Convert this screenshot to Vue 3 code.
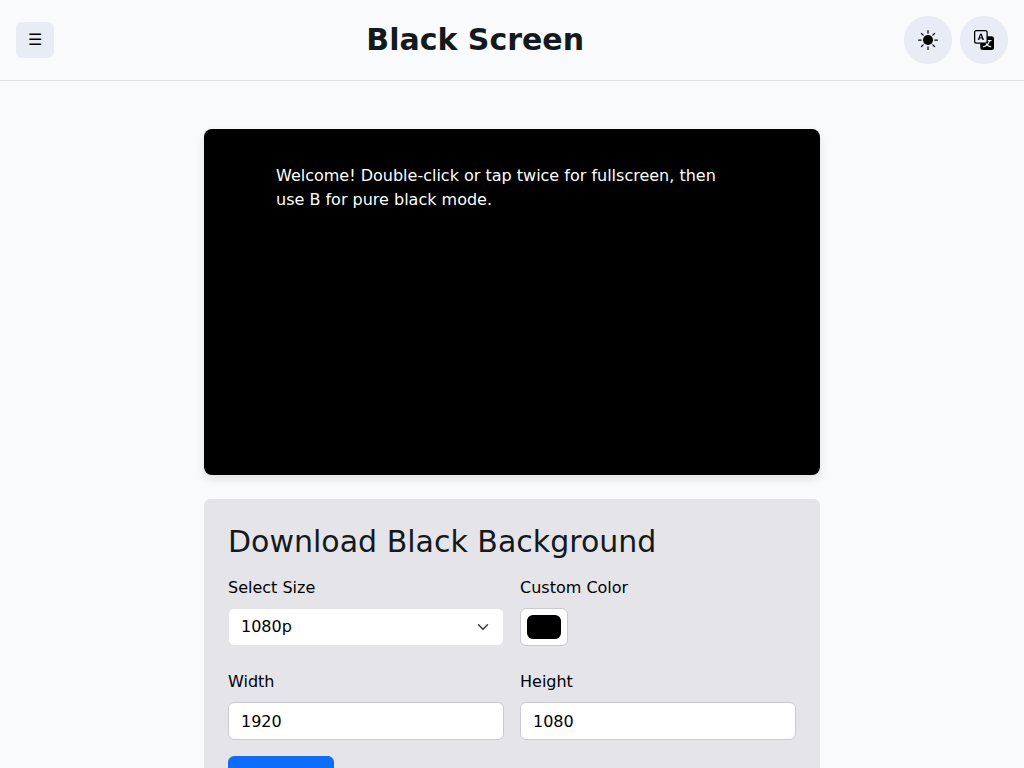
<script setup>
import { ref } from 'vue'

const sizes = {
  '720p': [1280, 720],
  '1080p': [1920, 1080],
  '4K': [3840, 2160],
}

const size = ref('1080p')
const color = ref('#000000')
const width = ref(1920)
const height = ref(1080)

function applySize() {
  ;[width.value, height.value] = sizes[size.value]
}
</script>

<template>
  <header class="topbar">
    <button class="menu" type="button" aria-label="Menu">☰</button>
    <h1 class="title">Black Screen</h1>
    <div class="actions">
      <button class="round" type="button" aria-label="Theme">
        <svg class="icon" viewBox="0 0 16 16" aria-hidden="true">
          <circle cx="8" cy="8" r="4" fill="currentColor" />
          <path
            d="M8 .5v2M8 13.5v2M.5 8h2M13.5 8h2M2.7 2.7l1.41 1.41M11.89 11.89l1.41 1.41M2.7 13.3l1.41-1.41M11.89 4.11l1.41-1.41"
            fill="none"
            stroke="currentColor"
            stroke-linecap="round"
          />
        </svg>
      </button>
      <button class="round" type="button" aria-label="Language">
        <svg class="icon" viewBox="0 0 16 16" fill="currentColor" aria-hidden="true">
          <path d="M4.545 6.714 4.11 8H3l1.862-5h1.284L8 8H6.833l-.435-1.286zm1.634-.736L5.5 3.956h-.049l-.679 2.022z" />
          <path d="M0 2a2 2 0 0 1 2-2h7a2 2 0 0 1 2 2v3h3a2 2 0 0 1 2 2v7a2 2 0 0 1-2 2H7a2 2 0 0 1-2-2v-3H2a2 2 0 0 1-2-2zm2-1a1 1 0 0 0-1 1v7a1 1 0 0 0 1 1h7a1 1 0 0 0 1-1V2a1 1 0 0 0-1-1zm7.138 9.995q.289.451.63.846c-.748.575-1.673 1.001-2.768 1.292.178.217.451.635.555.867 1.125-.359 2.08-.844 2.886-1.494.777.665 1.739 1.165 2.93 1.472.133-.254.414-.673.629-.89-1.125-.253-2.057-.694-2.82-1.284.681-.747 1.222-1.651 1.621-2.757H14V8h-3v1.047h.765c-.318.844-.74 1.546-1.272 2.13a6 6 0 0 1-.415-.492 2 2 0 0 1-.94.31" />
        </svg>
      </button>
    </div>
  </header>

  <main class="content">
    <section class="screen">
      <p class="hint">Welcome! Double-click or tap twice for fullscreen, then use B for pure black mode.</p>
    </section>

    <form class="panel" @submit.prevent>
      <h2 class="heading">Download Black Background</h2>
      <div class="fields">
        <div class="field">
          <label for="size">Select Size</label>
          <select id="size" v-model="size" class="control select" @change="applySize">
            <option v-for="(_, name) in sizes" :key="name">{{ name }}</option>
          </select>
        </div>
        <div class="field">
          <label for="color">Custom Color</label>
          <input id="color" v-model="color" class="swatch" type="color" />
        </div>
        <div class="field">
          <label for="width">Width</label>
          <input id="width" v-model="width" class="control" type="number" />
        </div>
        <div class="field">
          <label for="height">Height</label>
          <input id="height" v-model="height" class="control" type="number" />
        </div>
      </div>
      <button class="download" type="submit">Download</button>
    </form>
  </main>
</template>

<style>
body {
  background: #f8fafc;
  color: #000;
  font-family: "DejaVu Sans", sans-serif;
  font-size: 16px;
  line-height: 24px;
}
</style>

<style scoped>
* {
  box-sizing: border-box;
}

button,
input,
select {
  font: inherit;
  color: inherit;
}

.topbar {
  display: flex;
  align-items: center;
  justify-content: space-between;
  padding: 16px;
  border-bottom: 1px solid #dee0e3;
}

.menu {
  padding: 6px 12px;
  border: 0;
  border-radius: 6px;
  background: #e7ecf5;
}

.title {
  margin: 0;
  color: #14191d;
  font-size: 30px;
  line-height: 36px;
  font-weight: 700;
}

.actions {
  display: flex;
  gap: 8px;
  padding-left: 8px;
}

.round {
  display: flex;
  align-items: center;
  justify-content: center;
  width: 48px;
  height: 48px;
  padding: 0;
  border: 0;
  border-radius: 50%;
  background: #e7ecf5;
}

.icon {
  width: 20px;
  height: 20px;
}

.content {
  display: flex;
  flex-direction: column;
  gap: 24px;
  max-width: 664px;
  margin: 0 auto;
  padding: 48px 24px;
}

.screen {
  aspect-ratio: 1.78;
  padding: 35px 72px;
  border-radius: 8px;
  background: #000;
  box-shadow: 0 4px 8px rgba(0, 0, 0, 0.1);
  color: #fff;
}

.hint {
  margin: 0;
}

.panel {
  padding: 24px;
  border-radius: 6px;
  background: #e5e4e9;
}

.heading {
  margin: 0 0 16px;
  color: #14191d;
  font-size: 30px;
  line-height: 37px;
  font-weight: 400;
}

.fields {
  display: grid;
  grid-template-columns: 1fr 1fr;
  gap: 24px 16px;
  margin-bottom: 16px;
}

.field {
  display: flex;
  flex-direction: column;
  align-items: flex-start;
  gap: 8px;
}

.control {
  width: 100%;
  height: 38px;
  padding: 6px 12px;
  border: 1px solid #c9c9d1;
  border-radius: 6px;
  background: #fff;
  appearance: textfield;
}

.select {
  padding-right: 36px;
  border-color: #e5e4e9;
  background: #fff url("data:image/svg+xml,%3Csvg xmlns='http://www.w3.org/2000/svg' viewBox='0 0 16 16'%3E%3Cpath fill='none' stroke='%23343a40' stroke-linecap='round' stroke-linejoin='round' stroke-width='2' d='m2 5 6 6 6-6'/%3E%3C/svg%3E") no-repeat right 12px center / 16px 12px;
  appearance: none;
}

.swatch {
  width: 48px;
  height: 38px;
  padding: 6px;
  border: 1px solid #c9c9d1;
  border-radius: 6px;
  background: #fff;
  appearance: none;
}

.swatch::-webkit-color-swatch-wrapper {
  padding: 0;
}

.swatch::-webkit-color-swatch {
  border: 0;
  border-radius: 6px;
}

.download {
  padding: 6px 12px;
  border: 1px solid #0d6efd;
  border-radius: 6px;
  background: #0d6efd;
  color: #fff;
}
</style>
